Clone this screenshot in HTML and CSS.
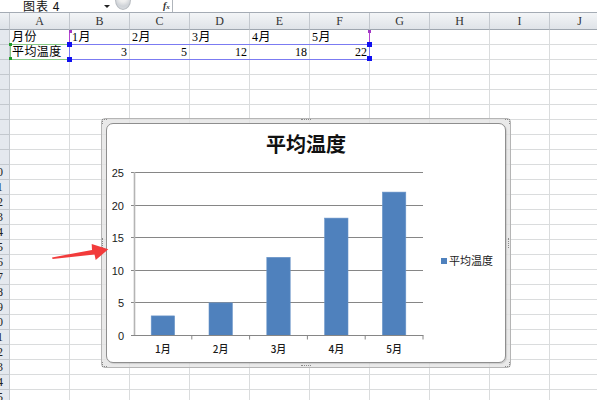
FILE: index.html
```html
<!DOCTYPE html>
<html lang="zh">
<head>
<meta charset="utf-8">
<title>平均温度</title>
<link rel="stylesheet" href="styles.css">
</head>
<body>
<div class="fbar">
  <div class="namebox"><span class="nb-text">图表 4</span><span class="nb-arrow"></span></div>
  <div class="nb-btn"></div>
  <div class="fx">f<span class="fx-x">x</span></div>
</div>
<div class="sheet">
  <div class="row hdr"><div class="rh"></div><div class="c">A</div><div class="c">B</div><div class="c">C</div><div class="c">D</div><div class="c">E</div><div class="c">F</div><div class="c">G</div><div class="c">H</div><div class="c">I</div><div class="c">J</div></div>
  <div class="row"><div class="rh">1</div><div class="c">月份</div><div class="c">1月</div><div class="c">2月</div><div class="c">3月</div><div class="c">4月</div><div class="c">5月</div><div class="c"></div><div class="c"></div><div class="c"></div><div class="c"></div></div>
  <div class="row"><div class="rh">2</div><div class="c">平均温度</div><div class="c num">3</div><div class="c num">5</div><div class="c num">12</div><div class="c num">18</div><div class="c num">22</div><div class="c"></div><div class="c"></div><div class="c"></div><div class="c"></div></div>
  <div class="row"><div class="rh">3</div><div class="c"></div><div class="c"></div><div class="c"></div><div class="c"></div><div class="c"></div><div class="c"></div><div class="c"></div><div class="c"></div><div class="c"></div><div class="c"></div></div>
  <div class="row"><div class="rh">4</div><div class="c"></div><div class="c"></div><div class="c"></div><div class="c"></div><div class="c"></div><div class="c"></div><div class="c"></div><div class="c"></div><div class="c"></div><div class="c"></div></div>
  <div class="row"><div class="rh">5</div><div class="c"></div><div class="c"></div><div class="c"></div><div class="c"></div><div class="c"></div><div class="c"></div><div class="c"></div><div class="c"></div><div class="c"></div><div class="c"></div></div>
  <div class="row"><div class="rh">6</div><div class="c"></div><div class="c"></div><div class="c"></div><div class="c"></div><div class="c"></div><div class="c"></div><div class="c"></div><div class="c"></div><div class="c"></div><div class="c"></div></div>
  <div class="row"><div class="rh">7</div><div class="c"></div><div class="c"></div><div class="c"></div><div class="c"></div><div class="c"></div><div class="c"></div><div class="c"></div><div class="c"></div><div class="c"></div><div class="c"></div></div>
  <div class="row"><div class="rh">8</div><div class="c"></div><div class="c"></div><div class="c"></div><div class="c"></div><div class="c"></div><div class="c"></div><div class="c"></div><div class="c"></div><div class="c"></div><div class="c"></div></div>
  <div class="row"><div class="rh">9</div><div class="c"></div><div class="c"></div><div class="c"></div><div class="c"></div><div class="c"></div><div class="c"></div><div class="c"></div><div class="c"></div><div class="c"></div><div class="c"></div></div>
  <div class="row"><div class="rh">10</div><div class="c"></div><div class="c"></div><div class="c"></div><div class="c"></div><div class="c"></div><div class="c"></div><div class="c"></div><div class="c"></div><div class="c"></div><div class="c"></div></div>
  <div class="row"><div class="rh">11</div><div class="c"></div><div class="c"></div><div class="c"></div><div class="c"></div><div class="c"></div><div class="c"></div><div class="c"></div><div class="c"></div><div class="c"></div><div class="c"></div></div>
  <div class="row"><div class="rh">12</div><div class="c"></div><div class="c"></div><div class="c"></div><div class="c"></div><div class="c"></div><div class="c"></div><div class="c"></div><div class="c"></div><div class="c"></div><div class="c"></div></div>
  <div class="row"><div class="rh">13</div><div class="c"></div><div class="c"></div><div class="c"></div><div class="c"></div><div class="c"></div><div class="c"></div><div class="c"></div><div class="c"></div><div class="c"></div><div class="c"></div></div>
  <div class="row"><div class="rh">14</div><div class="c"></div><div class="c"></div><div class="c"></div><div class="c"></div><div class="c"></div><div class="c"></div><div class="c"></div><div class="c"></div><div class="c"></div><div class="c"></div></div>
  <div class="row"><div class="rh">15</div><div class="c"></div><div class="c"></div><div class="c"></div><div class="c"></div><div class="c"></div><div class="c"></div><div class="c"></div><div class="c"></div><div class="c"></div><div class="c"></div></div>
  <div class="row"><div class="rh">16</div><div class="c"></div><div class="c"></div><div class="c"></div><div class="c"></div><div class="c"></div><div class="c"></div><div class="c"></div><div class="c"></div><div class="c"></div><div class="c"></div></div>
  <div class="row"><div class="rh">17</div><div class="c"></div><div class="c"></div><div class="c"></div><div class="c"></div><div class="c"></div><div class="c"></div><div class="c"></div><div class="c"></div><div class="c"></div><div class="c"></div></div>
  <div class="row"><div class="rh">18</div><div class="c"></div><div class="c"></div><div class="c"></div><div class="c"></div><div class="c"></div><div class="c"></div><div class="c"></div><div class="c"></div><div class="c"></div><div class="c"></div></div>
  <div class="row"><div class="rh">19</div><div class="c"></div><div class="c"></div><div class="c"></div><div class="c"></div><div class="c"></div><div class="c"></div><div class="c"></div><div class="c"></div><div class="c"></div><div class="c"></div></div>
  <div class="row"><div class="rh">20</div><div class="c"></div><div class="c"></div><div class="c"></div><div class="c"></div><div class="c"></div><div class="c"></div><div class="c"></div><div class="c"></div><div class="c"></div><div class="c"></div></div>
  <div class="row"><div class="rh">21</div><div class="c"></div><div class="c"></div><div class="c"></div><div class="c"></div><div class="c"></div><div class="c"></div><div class="c"></div><div class="c"></div><div class="c"></div><div class="c"></div></div>
  <div class="row"><div class="rh">22</div><div class="c"></div><div class="c"></div><div class="c"></div><div class="c"></div><div class="c"></div><div class="c"></div><div class="c"></div><div class="c"></div><div class="c"></div><div class="c"></div></div>
  <div class="row"><div class="rh">23</div><div class="c"></div><div class="c"></div><div class="c"></div><div class="c"></div><div class="c"></div><div class="c"></div><div class="c"></div><div class="c"></div><div class="c"></div><div class="c"></div></div>
  <div class="row"><div class="rh">24</div><div class="c"></div><div class="c"></div><div class="c"></div><div class="c"></div><div class="c"></div><div class="c"></div><div class="c"></div><div class="c"></div><div class="c"></div><div class="c"></div></div>
  <div class="row"><div class="rh">25</div><div class="c"></div><div class="c"></div><div class="c"></div><div class="c"></div><div class="c"></div><div class="c"></div><div class="c"></div><div class="c"></div><div class="c"></div><div class="c"></div></div>
</div>

<div class="sel sel-purple"></div>
<div class="sel sel-green"></div>
<div class="sel sel-blue"></div>
<span class="hd hd-purple hp1"></span>
<span class="hd hd-purple hp2"></span>
<span class="hd hd-green hg1"></span>
<span class="hd hd-green hg2"></span>
<span class="hd hd-blue hb1"></span>
<span class="hd hd-blue hb2"></span>
<span class="hd hd-blue hb3"></span>
<span class="hd hd-blue hb4"></span>

<div class="chart">
  <span class="grip grip-t"></span>
  <span class="grip grip-b"></span>
  <span class="grip grip-l"></span>
  <span class="grip grip-r"></span>
  <span class="corner corner-tl"></span>
  <span class="corner corner-tr"></span>
  <span class="corner corner-bl"></span>
  <span class="corner corner-br"></span>
  <div class="chart-inner">
    <svg class="plot" width="398" height="238" viewBox="0 0 398 238">
      <text class="ttl" x="199" y="28" text-anchor="middle">平均温度</text>
      <g class="grid">
        <line x1="24" y1="48.5" x2="316" y2="48.5"/>
        <line x1="24" y1="81.5" x2="316" y2="81.5"/>
        <line x1="24" y1="113.5" x2="316" y2="113.5"/>
        <line x1="24" y1="146.5" x2="316" y2="146.5"/>
        <line x1="24" y1="178.5" x2="316" y2="178.5"/>
      </g>
      <g class="ylab">
        <text x="17" y="52.5" text-anchor="end">25</text>
        <text x="17" y="85.5" text-anchor="end">20</text>
        <text x="17" y="117.5" text-anchor="end">15</text>
        <text x="17" y="150.5" text-anchor="end">10</text>
        <text x="17" y="182.5" text-anchor="end">5</text>
        <text x="17" y="215.5" text-anchor="end">0</text>
      </g>
      <g class="bars">
        <rect x="44.2" y="191.9" width="23.4" height="19.6"/>
        <rect x="102" y="178.9" width="23.4" height="32.6"/>
        <rect x="159.8" y="133.3" width="23.4" height="78.2"/>
        <rect x="217.6" y="94.1" width="23.4" height="117.4"/>
        <rect x="275.4" y="68.1" width="23.4" height="143.4"/>
      </g>
      <line class="yaxis" x1="27.5" y1="48" x2="27.5" y2="211.5"/>
      <g class="xaxis">
        <line x1="24" y1="211.5" x2="316.5" y2="211.5"/>
        <line x1="84.8" y1="211.5" x2="84.8" y2="215.5"/>
        <line x1="142.6" y1="211.5" x2="142.6" y2="215.5"/>
        <line x1="200.4" y1="211.5" x2="200.4" y2="215.5"/>
        <line x1="258.2" y1="211.5" x2="258.2" y2="215.5"/>
        <line x1="316" y1="211.5" x2="316" y2="215.5"/>
      </g>
      <g class="xlab">
        <text x="55.9" y="229" text-anchor="middle">1月</text>
        <text x="113.7" y="229" text-anchor="middle">2月</text>
        <text x="171.5" y="229" text-anchor="middle">3月</text>
        <text x="229.3" y="229" text-anchor="middle">4月</text>
        <text x="287.1" y="229" text-anchor="middle">5月</text>
      </g>
      <rect class="leg-key" x="334" y="134" width="6" height="6"/>
      <text class="leg" x="342" y="141">平均温度</text>
    </svg>
  </div>
</div>

<svg class="arrow" width="62" height="24" viewBox="0 0 62 24">
  <polygon points="2,17.4 42,10 41.7,4 58.3,9.3 45.7,20 44.5,14.6 2.6,19"/>
</svg>
</body>
</html>
```

FILE: styles.css
```css
html, body {
  margin: 0;
  padding: 0;
}
body {
  width: 597px;
  height: 400px;
  overflow: hidden;
  position: relative;
  background: #ffffff;
  font-family: "Noto Sans CJK SC", sans-serif;
  color: #000;
}

/* formula bar */
.fbar {
  height: 12px;
  border-bottom: 1px solid #a4abb4;
  display: flex;
  align-items: center;
  overflow: hidden;
  background: #ffffff;
}
.namebox {
  width: 89px;
  padding-left: 23px;
  display: flex;
  align-items: center;
  justify-content: space-between;
  font-size: 12px;
  line-height: 12px;
  color: #111;
}
.nb-text {
  letter-spacing: 1px;
}
.nb-arrow {
  width: 0;
  height: 0;
  border-left: 3px solid transparent;
  border-right: 3px solid transparent;
  border-top: 3px solid #222;
  margin-right: 2px;
}
.nb-btn {
  width: 16px;
  height: 20px;
  margin-left: 3px;
  align-self: flex-end;
  margin-bottom: 2px;
  box-sizing: border-box;
  border: 1px solid #b9bdc2;
  border-radius: 50%;
  background: radial-gradient(circle at 50% 40%, #f2f2f2 0, #eeeeee 28%, #cfd3d8 62%, #dde0e4 100%);
}
.fx {
  margin-left: 32px;
  padding-right: 2px;
  height: 12px;
  border-right: 1px solid #b0b5bb;
  font-family: "Liberation Serif", serif;
  font-style: italic;
  font-weight: bold;
  font-size: 10px;
  line-height: 11px;
  color: #333;
}
.fx-x {
  font-size: 7px;
}

/* sheet grid */
.sheet {
  display: flex;
  flex-direction: column;
}
.row {
  display: flex;
  height: 15px;
  flex-shrink: 0;
}
.rh {
  width: 25px;
  margin-left: -15px;
  flex-shrink: 0;
  box-sizing: border-box;
  border-right: 1px solid #c3c8ce;
  border-bottom: 1px solid #c3c8ce;
  background: #e4e8ee;
  text-align: center;
  font-family: "Liberation Serif", serif;
  font-size: 12px;
  line-height: 14px;
  color: #222;
}
.c {
  width: 60px;
  flex-shrink: 0;
  box-sizing: border-box;
  border-right: 1px solid #dadcdd;
  border-bottom: 1px solid #dadcdd;
  padding-left: 2px;
  font-family: "Liberation Serif", "Noto Sans CJK SC", serif;
  font-size: 12px;
  line-height: 14px;
  white-space: nowrap;
  overflow: hidden;
  letter-spacing: 0.4px;
}
.num {
  text-align: right;
  padding-right: 2px;
  letter-spacing: 0;
}
.hdr {
  height: 17px;
}
.hdr .rh {
  background: linear-gradient(#eef1f4, #dde2e8);
  border-bottom: 1px solid #9ea6af;
}
.hdr .c {
  background: linear-gradient(#f3f5f7, #dfe3e8);
  border-right: 1px solid #c3c8ce;
  border-bottom: 1px solid #9ea6af;
  text-align: center;
  padding: 0;
  font-family: "Liberation Serif", serif;
  font-size: 12px;
  line-height: 16px;
  color: #333;
  letter-spacing: 0;
}

/* selection highlights (overlays) */
.sel {
  position: absolute;
  box-sizing: border-box;
}
.sel-purple {
  left: 69px;
  top: 30px;
  width: 301px;
  height: 15px;
  border-left: 1px solid #b347d1;
  border-right: 1px solid #b347d1;
}
.sel-green {
  left: 10px;
  top: 44px;
  width: 60px;
  height: 16px;
  border: 1px solid #86c986;
}
.sel-blue {
  left: 69px;
  top: 44px;
  width: 301px;
  height: 16px;
  border: 1px solid #7b7bf2;
}
.hd {
  position: absolute;
  width: 4px;
  height: 4px;
}
.hd-purple { background: #a236c4; width: 3px; height: 3px; }
.hd-green { background: #1f9a2a; width: 3px; height: 3px; }
.hd-blue { background: #1010f0; width: 5px; height: 5px; }
.hp1 { left: 69px; top: 30px; }
.hp2 { left: 368px; top: 30px; }
.hg1 { left: 9px; top: 43px; }
.hg2 { left: 9px; top: 57px; }
.hb1 { left: 67px; top: 42px; }
.hb2 { left: 367px; top: 42px; }
.hb3 { left: 67px; top: 57px; }
.hb4 { left: 367px; top: 56px; }

/* chart */
.chart {
  position: absolute;
  left: 101px;
  top: 118px;
  width: 410px;
  height: 250px;
  box-sizing: border-box;
  border: 1px solid #b5b5b5;
  border-radius: 4px;
  background: rgba(228, 228, 228, 0.8);
  padding: 4px;
}
.chart-inner {
  width: 400px;
  height: 240px;
  box-sizing: border-box;
  border: 1px solid #8e8e8e;
  border-radius: 7px;
  background: #ffffff;
  overflow: hidden;
  box-shadow: 1px 1px 1px rgba(0, 0, 0, 0.12);
}
.plot {
  display: block;
}
.ttl {
  font-family: "Noto Sans CJK SC", sans-serif;
  font-weight: 700;
  font-size: 20px;
  fill: #111;
}
.grid line {
  stroke: #868686;
  stroke-width: 1;
}
.yaxis {
  stroke: #b4b4b4;
  stroke-width: 1.6;
}
.xaxis line {
  stroke: #868686;
  stroke-width: 1;
}
.bars rect {
  fill: #4f81bd;
  stroke: #6a95c9;
  stroke-width: 0.6;
}
.ylab text {
  font-family: "Liberation Sans", sans-serif;
  font-size: 11px;
  fill: #1a1a1a;
}
.xlab text {
  font-family: "Noto Sans CJK SC", sans-serif;
  font-size: 10px;
  font-weight: 500;
  fill: #1a1a1a;
}
.leg-key {
  fill: #4f81bd;
}
.leg {
  font-family: "Noto Sans CJK SC", sans-serif;
  font-size: 11px;
  fill: #1a1a1a;
}

/* frame grips (overlay decorations on the chart frame) */
.grip {
  position: absolute;
  box-sizing: border-box;
}
.grip-t, .grip-b {
  left: 199px;
  width: 10px;
  height: 2px;
  border-top: 1px dotted #8a8a8a;
}
.grip-t { top: 0; }
.grip-b { bottom: 0; }
.grip-l, .grip-r {
  top: 119px;
  width: 2px;
  height: 10px;
  border-left: 1px dotted #8a8a8a;
}
.grip-l { left: 0; }
.grip-r { right: 0; }
.corner {
  position: absolute;
  width: 5px;
  height: 5px;
  box-sizing: border-box;
}
.corner-tl { left: 0; top: 0; border-left: 1px dotted #8a8a8a; border-top: 1px dotted #8a8a8a; }
.corner-tr { right: 0; top: 0; border-right: 1px dotted #8a8a8a; border-top: 1px dotted #8a8a8a; }
.corner-bl { left: 0; bottom: 0; border-left: 1px dotted #8a8a8a; border-bottom: 1px dotted #8a8a8a; }
.corner-br { right: 0; bottom: 0; border-right: 1px dotted #8a8a8a; border-bottom: 1px dotted #8a8a8a; }

/* red annotation arrow */
.arrow {
  position: absolute;
  left: 50px;
  top: 240px;
}
.arrow polygon {
  fill: #f23b3b;
}
```
